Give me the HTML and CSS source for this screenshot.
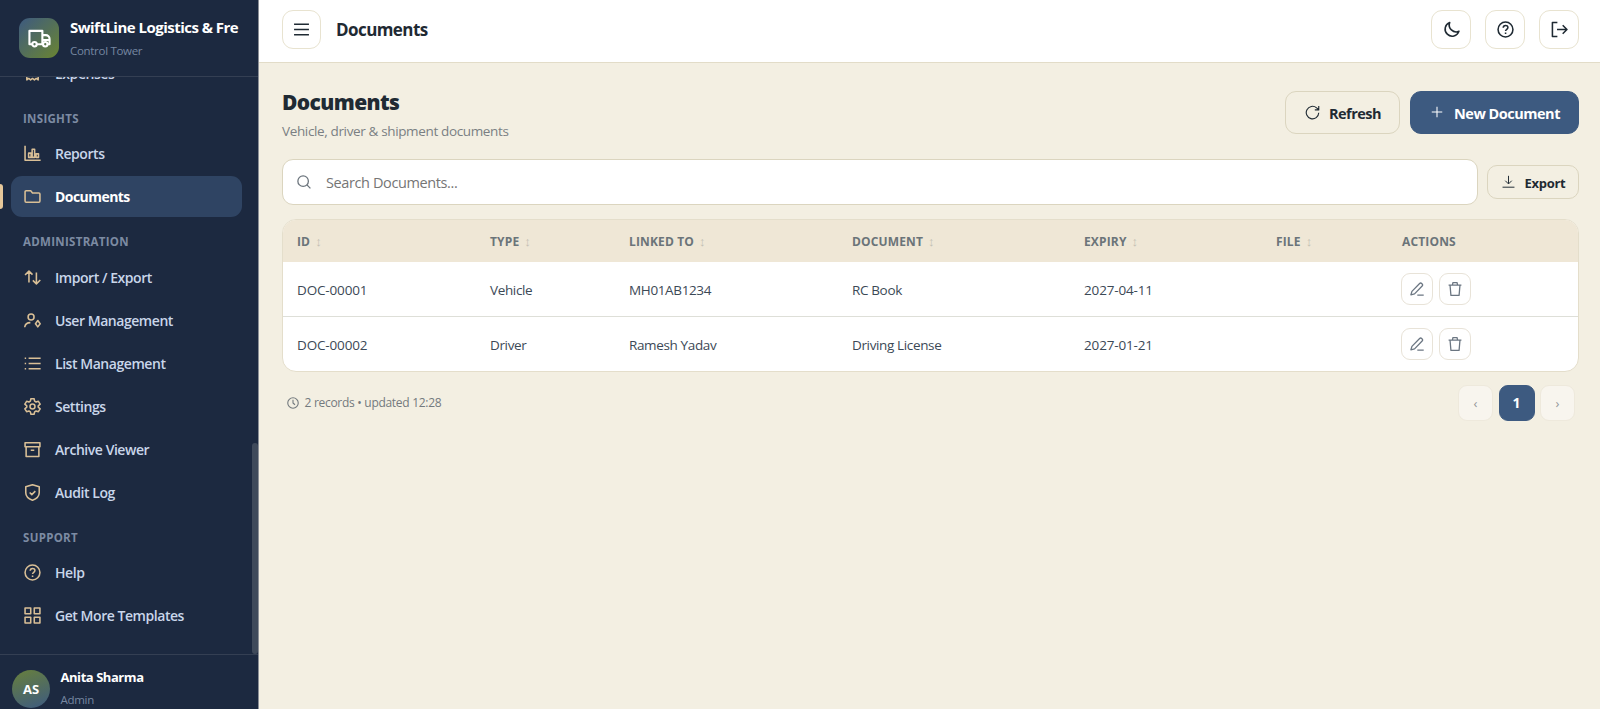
FILE: index.html
```html
<!doctype html>
<html lang="en">
  <head>
    <meta charset="UTF-8" />
    <meta name="viewport" content="width=device-width, initial-scale=1.0" />
    <title>Documents</title>
    <link rel="stylesheet" href="styles.css">
  </head>
  <body>
    <svg class="sprite" xmlns="http://www.w3.org/2000/svg">
      <symbol id="i-truck" viewBox="0 0 24 24"><path d="M4.500 18H1.500V4h13.500v14H9M15 8.500h3.500a4 4 0 0 1 4 4V18h-2M15 13.500h7"/><circle cx="6.800" cy="18" r="2.300"/><circle cx="18" cy="18" r="2.300"/></symbol>
      <symbol id="i-receipt" viewBox="0 0 24 24"><path d="M4 3h16v18l-2.700-2-2.600 2-2.700-2-2.700 2-2.600-2L4 21zM8 8h8M8 12h8"/></symbol>
      <symbol id="i-chart" viewBox="0 0 24 24"><path d="M1.500 1v20.500H23.500"/><path d="M6.500 17.500v-6H10v6zM11.500 17.500V6H15v11.500zM17 17.500v-5h3.500v5z"/></symbol>
      <symbol id="i-folder" viewBox="0 0 24 24"><path d="M3 4h6.500l2.500 3h9A1.500 1.500 0 0 1 22.500 8.500v10A1.500 1.500 0 0 1 21 20H3A1.500 1.500 0 0 1 1.500 18.500v-13A1.500 1.500 0 0 1 3 4z"/></symbol>
      <symbol id="i-swap" viewBox="0 0 24 24"><path d="M7 19V3.500M1.500 8.500L7 3l5 5M17.500 5v15.500M23 15.500L17.500 21l-5-5"/></symbol>
      <symbol id="i-user" viewBox="0 0 24 24"><circle cx="10" cy="7" r="4.200"/><path d="M1 21.500c.5-4 3.500-6.500 8-6.500M19.500 12l3.300 4.500-3.300 4.500-3.300-4.500z"/></symbol>
      <symbol id="i-list" viewBox="0 0 24 24"><path d="M6.500 4.500h17M6.500 12h17M6.500 19.500h17M1 4.500h2M1 12h2M1 19.500h2"/></symbol>
      <symbol id="i-gear" viewBox="0 0 24 24"><circle cx="12" cy="12" r="3.500"/><path d="M9.800 1h4.400l.8 3.500 2 1.200 3.300-1 2.500 4-2.700 2.400v1.800l2.700 2.400-2.500 4-3.300-1-2 1.200-.8 3.500H9.800L9 19.500l-2-1.200-3.300 1-2.500-4 2.700-2.400v-1.800L1.200 8.700l2.500-4 3.300 1 2-1.200z"/></symbol>
      <symbol id="i-archive" viewBox="0 0 24 24"><path d="M1.500 2.500h21V8h-21zM3 8v14h18V8M9.500 13h5"/></symbol>
      <symbol id="i-shield" viewBox="0 0 24 24"><path d="M12 1l9.500 3v8.500c0 5-4 8.500-9.500 10.500-5.500-2-9.500-5.500-9.500-10.500V4zM8 12l3 3 5-5"/></symbol>
      <symbol id="i-help" viewBox="0 0 24 24"><circle cx="12" cy="12" r="10.500"/><path d="M8.800 9.500c0-4.300 6.600-4.300 6.600-.3 0 2.500-3.300 2.500-3.300 5M12.100 16.300V18.200"/></symbol>
      <symbol id="i-grid" viewBox="0 0 24 24"><path d="M1.500 1.500h8v8h-8zM14.500 1.500h8v8h-8zM1.500 14.500h8v8h-8zM14.500 14.500h8v8h-8z"/></symbol>
      <symbol id="i-menu" viewBox="0 0 24 24"><path d="M1.500 4.500h21M1.500 12h21M1.500 19.500h21"/></symbol>
      <symbol id="i-moon" viewBox="0 0 24 24"><path d="M9.500 2A10 10 0 1 0 22.500 14.500 9.800 9.800 0 0 1 9.500 2z"/></symbol>
      <symbol id="i-logout" viewBox="0 0 24 24"><path d="M9 2H2v20h7M8.500 12H22.500M16.500 6l6 6-6 6"/></symbol>
      <symbol id="i-refresh" viewBox="0 0 24 24"><path d="M22 12.500A10 10 0 1 1 18.500 4.500l3.500 3M22 1.500v6.300h-6.300"/></symbol>
      <symbol id="i-plus" viewBox="0 0 24 24"><path d="M12 3v18M3 12h18"/></symbol>
      <symbol id="i-search" viewBox="0 0 24 24"><circle cx="10.500" cy="10.500" r="9"/><path d="M17 17l6 6"/></symbol>
      <symbol id="i-download" viewBox="0 0 24 24"><path d="M12 1.500V16M6 10.500l6 6 6-6M1 22.500h22"/></symbol>
      <symbol id="i-pen" viewBox="0 0 24 24"><path d="M1.500 22l1.800-6L16.500 2.500a2.500 2.500 0 0 1 3.500 0l.8.800a2.500 2.500 0 0 1 0 3.500L7.800 20.300zM12.500 22.500h11"/></symbol>
      <symbol id="i-trash" viewBox="0 0 24 24"><path d="M1 5.500h22M3.500 5.500L5 23h14l1.500-17.500M7.500 5.500L8.500 1h7l1 4.500"/></symbol>
      <symbol id="i-clock" viewBox="0 0 24 24"><circle cx="12" cy="12" r="10.500"/><path d="M12 5.500V12l4 3.500"/></symbol>
    </svg>

    <aside class="sidebar">
      <div class="brand">
        <div class="brand-logo"><svg class="icon"><use href="#i-truck" /></svg></div>
        <div class="brand-text">
          <div class="brand-name">SwiftLine Logistics &amp; Fre</div>
          <div class="brand-sub">Control Tower</div>
        </div>
      </div>
      <nav class="nav">
        <a class="nav-item"><svg class="icon"><use href="#i-receipt" /></svg>Expenses</a>
        <div class="nav-label">Insights</div>
        <a class="nav-item"><svg class="icon"><use href="#i-chart" /></svg>Reports</a>
        <a class="nav-item active"><svg class="icon"><use href="#i-folder" /></svg>Documents</a>
        <div class="nav-label">Administration</div>
        <a class="nav-item"><svg class="icon"><use href="#i-swap" /></svg>Import / Export</a>
        <a class="nav-item"><svg class="icon"><use href="#i-user" /></svg>User Management</a>
        <a class="nav-item"><svg class="icon"><use href="#i-list" /></svg>List Management</a>
        <a class="nav-item"><svg class="icon"><use href="#i-gear" /></svg>Settings</a>
        <a class="nav-item"><svg class="icon"><use href="#i-archive" /></svg>Archive Viewer</a>
        <a class="nav-item"><svg class="icon"><use href="#i-shield" /></svg>Audit Log</a>
        <div class="nav-label">Support</div>
        <a class="nav-item"><svg class="icon"><use href="#i-help" /></svg>Help</a>
        <a class="nav-item"><svg class="icon"><use href="#i-grid" /></svg>Get More Templates</a>
        <span class="scroll-thumb"></span>
      </nav>
      <div class="user">
        <div class="avatar">AS</div>
        <div class="user-text">
          <div class="user-name">Anita Sharma</div>
          <div class="user-role">Admin</div>
        </div>
      </div>
    </aside>

    <div class="main">
      <header class="topbar">
        <button class="square-btn menu-btn"><svg class="icon"><use href="#i-menu" /></svg></button>
        <div class="topbar-title">Documents</div>
        <div class="topbar-actions">
          <button class="square-btn"><svg class="icon"><use href="#i-moon" /></svg></button>
          <button class="square-btn"><svg class="icon"><use href="#i-help" /></svg></button>
          <button class="square-btn"><svg class="icon"><use href="#i-logout" /></svg></button>
        </div>
      </header>

      <main class="content">
        <div class="page-head">
          <div>
            <h1>Documents</h1>
            <p class="page-sub">Vehicle, driver &amp; shipment documents</p>
          </div>
          <div class="page-actions">
            <button class="btn"><svg class="icon"><use href="#i-refresh" /></svg>Refresh</button>
            <button class="btn btn-primary"><svg class="icon"><use href="#i-plus" /></svg>New Document</button>
          </div>
        </div>

        <div class="toolbar">
          <label class="search">
            <svg class="icon"><use href="#i-search" /></svg>
            <input type="text" placeholder="Search Documents..." />
          </label>
          <button class="btn btn-small"><svg class="icon"><use href="#i-download" /></svg>Export</button>
        </div>

        <div class="table-card">
          <table>
            <colgroup>
              <col class="c-id" /><col class="c-type" /><col class="c-linked" /><col class="c-doc" />
              <col class="c-expiry" /><col class="c-file" /><col />
            </colgroup>
            <thead>
              <tr>
                <th>ID<span class="sort">↕</span></th>
                <th>Type<span class="sort">↕</span></th>
                <th>Linked To<span class="sort">↕</span></th>
                <th>Document<span class="sort">↕</span></th>
                <th>Expiry<span class="sort">↕</span></th>
                <th>File<span class="sort">↕</span></th>
                <th>Actions</th>
              </tr>
            </thead>
            <tbody>
              <tr>
                <td class="num">DOC-00001</td>
                <td>Vehicle</td>
                <td>MH01AB1234</td>
                <td>RC Book</td>
                <td class="num">2027-04-11</td>
                <td></td>
                <td>
                  <div class="row-actions">
                    <button class="row-btn"><svg class="icon"><use href="#i-pen" /></svg></button>
                    <button class="row-btn"><svg class="icon"><use href="#i-trash" /></svg></button>
                  </div>
                </td>
              </tr>
              <tr>
                <td class="num">DOC-00002</td>
                <td>Driver</td>
                <td>Ramesh Yadav</td>
                <td>Driving License</td>
                <td class="num">2027-01-21</td>
                <td></td>
                <td>
                  <div class="row-actions">
                    <button class="row-btn"><svg class="icon"><use href="#i-pen" /></svg></button>
                    <button class="row-btn"><svg class="icon"><use href="#i-trash" /></svg></button>
                  </div>
                </td>
              </tr>
            </tbody>
          </table>
        </div>

        <div class="table-foot">
          <div class="records"><svg class="icon"><use href="#i-clock" /></svg>2 records • updated 12:28</div>
          <div class="pager">
            <button class="page-btn" disabled>‹</button>
            <button class="page-btn current">1</button>
            <button class="page-btn" disabled>›</button>
          </div>
        </div>
      </main>
    </div>
  </body>
</html>
```
FILE: styles.css
```css
* {
  box-sizing: border-box;
}

body {
  margin: 0;
  height: 100vh;
  display: flex;
  overflow: hidden;
  background: #f3efe2;
  color: #1f2a33;
  font-family: "Segoe UI", "Open Sans", "Noto Sans", sans-serif;
  font-size: 14px;
}

button,
input {
  font-family: inherit;
  color: inherit;
}

button {
  display: flex;
  align-items: center;
  justify-content: center;
  padding: 0;
  cursor: pointer;
}

.sprite {
  position: absolute;
  width: 0;
  height: 0;
}

.icon {
  width: 17px;
  height: 17px;
  flex: none;
  fill: none;
  stroke: currentColor;
  stroke-width: 2.200;
  stroke-linejoin: round;
}

/* Sidebar */
.sidebar {
  width: 259px;
  flex: none;
  height: 100vh;
  display: flex;
  flex-direction: column;
  background: #1c2940;
  border-right: 1px solid #8b8f96;
  overflow: hidden;
}

.brand {
  height: 77px;
  flex: none;
  display: flex;
  align-items: center;
  gap: 11px;
  padding: 0 0 0 19px;
  border-bottom: 1px solid #343f53;
}

.brand-logo {
  width: 40px;
  height: 40px;
  flex: none;
  display: flex;
  align-items: center;
  justify-content: center;
  border-radius: 11px;
  background: linear-gradient(135deg, #3d5a80, #6a8532);
  color: #fff;
}

.brand-logo .icon {
  width: 23px;
  height: 23px;
}

.brand-name {
  color: #fff;
  font-size: 15px;
  font-weight: 700;
  line-height: 22px;
  letter-spacing: -0.52px;
  white-space: nowrap;
}

.brand-sub {
  margin-top: 4px;
  color: #7687a0;
  font-size: 11.500px;
  line-height: 18px;
  letter-spacing: -0.3px;
}

.nav {
  position: relative;
  flex: 1;
  min-height: 0;
  display: flex;
  flex-direction: column;
  justify-content: flex-end;
  padding: 0 16px 16px 11px;
  overflow: hidden;
}

.nav-label {
  flex: none;
  height: 37.500px;
  padding: 14px 12px 0;
  color: #7c8ba3;
  font-size: 11.500px;
  font-weight: 700;
  line-height: 18px;
  letter-spacing: 0.3px;
  text-transform: uppercase;
}

.nav-item {
  flex: none;
  display: flex;
  align-items: center;
  gap: 14px;
  height: 41px;
  margin-bottom: 2px;
  padding: 0 0 0 13px;
  border-radius: 11px;
  color: #c9d6ea;
  font-size: 14px;
  font-weight: 600;
  letter-spacing: -0.45px;
}

.nav-item .icon {
  color: #d9bf96;
}

.nav-item.active {
  position: relative;
  background: #2f4463;
  color: #fff;
  font-weight: 700;
  letter-spacing: -0.55px;
}

.nav-item.active::before {
  content: "";
  position: absolute;
  left: -11px;
  top: 8px;
  width: 3px;
  height: 25px;
  border-radius: 0 3px 3px 0;
  background: #e6c79a;
}

.scroll-thumb {
  position: absolute;
  right: 0;
  bottom: 0;
  width: 6px;
  height: 211px;
  border-radius: 3px;
  background: #3f4a5b;
}

.user {
  flex: none;
  height: 55px;
  display: flex;
  align-items: flex-start;
  gap: 10.500px;
  padding: 15px 12px 0;
  border-top: 1px solid #343f53;
}

.avatar {
  width: 38px;
  height: 38px;
  flex: none;
  display: flex;
  align-items: center;
  justify-content: center;
  border-radius: 50%;
  background: linear-gradient(160deg, #68803c, #3d5a80);
  color: #fff;
  font-size: 13px;
  font-weight: 700;
}

.user-name {
  margin-top: -3px;
  color: #fff;
  font-size: 13px;
  font-weight: 700;
  line-height: 20px;
  letter-spacing: -0.45px;
}

.user-role {
  margin-top: 4px;
  color: #7687a0;
  font-size: 11.500px;
  line-height: 18px;
  letter-spacing: -0.3px;
}

/* Top bar */
.main {
  flex: 1;
  min-width: 0;
}

.topbar {
  height: 63px;
  display: flex;
  align-items: center;
  padding: 0 21px 3px 23px;
  background: #fff;
  border-bottom: 1px solid #e2dcc8;
}

.square-btn {
  width: 40px;
  height: 39px;
  border: 1px solid #e8e3d0;
  border-radius: 11px;
  background: #fff;
}

.menu-btn {
  width: 39px;
}

.topbar-title {
  margin-left: 15px;
  font-size: 17px;
  font-weight: 700;
  letter-spacing: -0.57px;
}

.topbar-actions {
  display: flex;
  gap: 14px;
  margin-left: auto;
}

/* Page */
.content {
  padding: 28px 21px 0 23px;
}

.page-head {
  display: flex;
  justify-content: space-between;
  height: 68px;
}

h1 {
  margin: -1px 0 0;
  font-size: 21px;
  font-weight: 800;
  line-height: 24px;
  letter-spacing: -0.6px;
}

.page-sub {
  margin: 7px 0 0;
  color: #7a7f83;
  font-size: 13.500px;
  line-height: 20px;
  letter-spacing: -0.36px;
}

.page-actions {
  display: flex;
  gap: 10px;
}

.btn {
  width: 115px;
  height: 43px;
  gap: 9px;
  padding: 1px 0 0 1px;
  border: 1px solid #dbd5bf;
  border-radius: 11px;
  background: transparent;
  font-size: 14.500px;
  font-weight: 700;
  letter-spacing: -0.5px;
}

.btn .icon {
  width: 15px;
  height: 15px;
  margin-top: -2px;
  stroke-width: 1.800;
}

.btn-primary {
  width: 169px;
  gap: 10px;
  border-color: #3d5a80;
  background: #3d5a80;
  color: #fff;
}

.btn-primary .icon {
  width: 14px;
  height: 14px;
}

.btn-small {
  width: 92px;
  height: 34px;
  border-radius: 10px;
  font-size: 13px;
  letter-spacing: -0.3px;
}

.btn-small .icon {
  width: 13px;
  height: 13px;
  margin-right: 1px;
}

.toolbar {
  display: flex;
  align-items: center;
  gap: 9px;
}

.search {
  flex: 1;
  height: 46px;
  display: flex;
  align-items: center;
  gap: 15px;
  padding: 0 14px;
  border: 1px solid #dbd5bf;
  border-radius: 11px;
  background: #fff;
  color: #6b747c;
}

.search .icon {
  width: 14px;
  height: 14px;
}

.search input {
  flex: 1;
  border: 0;
  padding: 1px 0 0;
  outline: 0;
  background: none;
  font-size: 14.500px;
  letter-spacing: -0.39px;
}

.search input::placeholder {
  color: #757575;
}

.table-card {
  margin-top: 14px;
  border: 1px solid #e4decb;
  border-radius: 14px;
  background: #fff;
  overflow: hidden;
}

table {
  width: 100%;
  table-layout: fixed;
  border-collapse: collapse;
}

.c-id {
  width: 193px;
}

.c-type {
  width: 139px;
}

.c-linked {
  width: 223px;
}

.c-doc {
  width: 232px;
}

.c-expiry {
  width: 192px;
}

.c-file {
  width: 126px;
}

th {
  height: 42px;
  padding: 0 14px;
  background: #efe7d6;
  color: #6b7479;
  font-size: 12px;
  font-weight: 700;
  letter-spacing: 0.15px;
  text-align: left;
  text-transform: uppercase;
}

.sort {
  margin-left: 5px;
  color: #c3bfb3;
  font-size: 13px;
  font-weight: 400;
}

td {
  height: 54.500px;
  padding: 1px 14px 0;
  color: #3c4956;
  font-size: 13.500px;
  letter-spacing: -0.36px;
}

td.num {
  letter-spacing: -0.15px;
}

tbody tr + tr td {
  border-top: 1px solid #dedfd8;
}

.row-actions {
  display: flex;
  gap: 6px;
  margin: -1px 0 0 -1px;
}

.row-btn {
  width: 32px;
  height: 32px;
  border: 1px solid #e8e3d8;
  border-radius: 9px;
  background: #fff;
  color: #6b7682;
}

.row-btn .icon {
  width: 14px;
  height: 14px;
}

.table-foot {
  display: flex;
  align-items: center;
  justify-content: space-between;
  padding: 12.500px 4px 0 5px;
}

.records {
  display: flex;
  align-items: center;
  gap: 5.500px;
  color: #737a7e;
  font-size: 12px;
  letter-spacing: -0.29px;
}

.records .icon {
  width: 12px;
  height: 12px;
}

.pager {
  display: flex;
  gap: 5.500px;
}

.page-btn {
  width: 35px;
  height: 36px;
  border: 1px solid #eee9dc;
  border-radius: 9px;
  background: #f8f5ee;
  color: #94979a;
  font-size: 13px;
}

.page-btn.current {
  width: 36px;
  border-color: #3d5a80;
  background: #3d5a80;
  color: #fff;
  font-size: 14px;
  font-weight: 700;
}
```
